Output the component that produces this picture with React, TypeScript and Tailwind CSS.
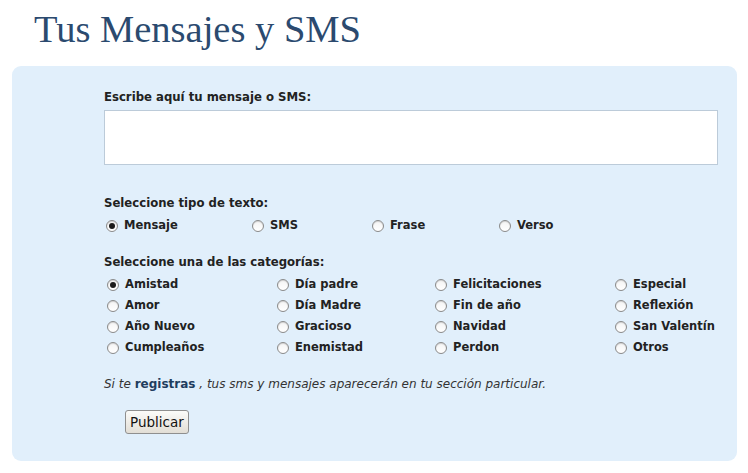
import React from "react";

const sans = "font-['DejaVu_Sans',Verdana,sans-serif]";

function Radio({ checked = false }: { checked?: boolean }) {
  return (
    <span className="flex h-[12px] w-[12px] shrink-0 items-center justify-center rounded-full border border-[#8a8a8a] bg-gradient-to-b from-[#f4f4f4] to-white shadow-[inset_0_1px_1px_rgba(0,0,0,0.15)]">
      {checked && <span className="h-[6px] w-[6px] rounded-full bg-[#1a1a1a]" />}
    </span>
  );
}

function Option({ label, checked = false }: { label: string; checked?: boolean }) {
  return (
    <label className="flex h-[21px] items-center gap-[6px]">
      <Radio checked={checked} />
      <span className="text-[11.5px] font-bold text-[#222]">{label}</span>
    </label>
  );
}

const tipos = ["Mensaje", "SMS", "Frase", "Verso"];

const categorias = [
  ["Amistad", "Día padre", "Felicitaciones", "Especial"],
  ["Amor", "Día Madre", "Fin de año", "Reflexión"],
  ["Año Nuevo", "Gracioso", "Navidad", "San Valentín"],
  ["Cumpleaños", "Enemistad", "Perdon", "Otros"],
];

export default function App() {
  return (
    <div className={`min-h-screen w-[748px] bg-white ${sans}`}>
      <h1 className="ml-[34px] h-[56px] pt-[8px] font-['Liberation_Serif',serif] text-[38.5px] leading-[42px] text-[#2b4a6f]">
        Tus Mensajes y SMS
      </h1>

      <div className="ml-[12px] mt-[10px] h-[395px] w-[725px] rounded-[9px] bg-[#e1effb] pl-[92px] pt-[24px]">
        <div className="text-[11.7px] font-bold leading-[14px] text-[#222]">Escribe aquí tu mensaje o SMS:</div>
        <textarea className="mt-[6px] block h-[55px] w-[614px] resize-none border border-[#bccbd9] bg-white outline-none" />

        <div className="mt-[31px] text-[11.7px] font-bold leading-[14px] text-[#222]">Seleccione tipo de texto:</div>
        <div className="ml-[2px] mt-[5px] grid grid-cols-[146px_120px_127px_auto]">
          {tipos.map((t, i) => (
            <Option key={t} label={t} checked={i === 0} />
          ))}
        </div>

        <div className="mt-[19px] text-[11.7px] font-bold leading-[14px] text-[#222]">Seleccione una de las categorías:</div>
        <div className="ml-[3px] mt-[5px] grid grid-cols-[170px_158px_180px_auto]">
          {categorias.flat().map((c, i) => (
            <Option key={c} label={c} checked={i === 0} />
          ))}
        </div>

        <p className="mt-[19px] text-[12px] italic leading-[14px] text-[#333]">
          Si te <a className="font-bold not-italic text-[#1f3d5e]">registras</a> , tus sms y mensajes aparecerán en tu sección particular.
        </p>

        <button className="ml-[21px] mt-[19px] h-[24px] rounded-[3px] border border-[#8f8f8f] bg-gradient-to-b from-[#fbfbf9] to-[#e2ded6] px-[4px] text-[13.5px] leading-[20px] text-[#111]">
          Publicar
        </button>
      </div>
    </div>
  );
}
